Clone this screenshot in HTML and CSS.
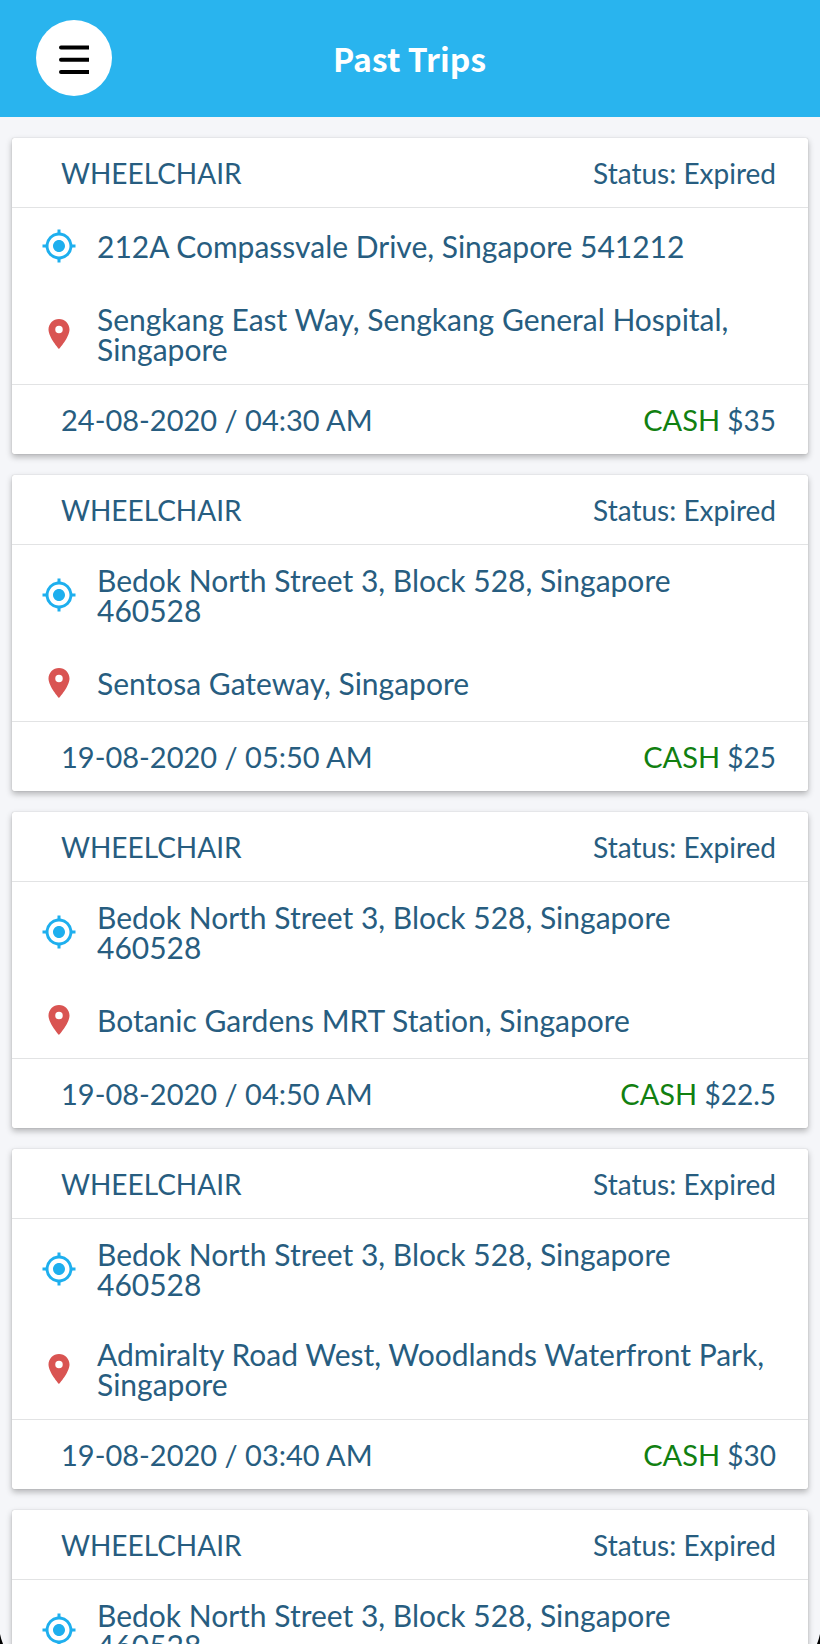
FILE: index.html
```html
<!DOCTYPE html>
<html lang="en">
<head>
    <meta charset="UTF-8">
    <meta name="viewport" content="width=device-width, initial-scale=1.0">
    <title>Past Trips</title>
    <link rel="stylesheet" href="styles.css">
</head>
<body>
    <svg class="sprite" aria-hidden="true">
        <symbol id="pickup" viewBox="0 0 24 24">
            <path d="M12 8c-2.21 0-4 1.79-4 4s1.79 4 4 4 4-1.79 4-4-1.79-4-4-4zm8.94 3A8.994 8.994 0 0 0 13 3.06V1h-2v2.06A8.994 8.994 0 0 0 3.06 11H1v2h2.06A8.994 8.994 0 0 0 11 20.94V23h2v-2.06A8.994 8.994 0 0 0 20.94 13H23v-2h-2.06zM12 19c-3.87 0-7-3.13-7-7s3.13-7 7-7 7 3.13 7 7-3.13 7-7 7z"/>
        </symbol>
        <symbol id="drop" viewBox="0 0 24 24">
            <path d="M12 2C8.13 2 5 5.13 5 9c0 5.25 7 13 7 13s7-7.75 7-13c0-3.87-3.13-7-7-7zm0 9.500a2.500 2.500 0 0 1 0-5 2.500 2.500 0 0 1 0 5z"/>
        </symbol>
    </svg>

    <header class="topbar">
        <button class="menu" type="button" aria-label="Menu">
            <svg viewBox="0 0 30 30" aria-hidden="true">
                <path d="M2 .5h28v4H2a2 2 0 0 1 0-4zM2 12.800h28v4H2a2 2 0 0 1 0-4zM2 25h28v4H2a2 2 0 0 1 0-4z"/>
            </svg>
        </button>
        <h1>Past Trips</h1>
    </header>

    <main class="trips">
        <article class="card">
            <div class="card-head">
                <h2>WHEELCHAIR</h2>
                <span>Status: Expired</span>
            </div>
            <div class="place">
                <svg class="icon pickup"><use href="#pickup"/></svg>
                <p>212A Compassvale Drive, Singapore 541212</p>
            </div>
            <div class="place">
                <svg class="icon drop"><use href="#drop"/></svg>
                <p>Sengkang East Way, Sengkang General Hospital, Singapore</p>
            </div>
            <div class="card-foot">
                <time>24-08-2020 / 04:30 AM</time>
                <span><span class="cash">CASH</span> $35</span>
            </div>
        </article>

        <article class="card">
            <div class="card-head">
                <h2>WHEELCHAIR</h2>
                <span>Status: Expired</span>
            </div>
            <div class="place">
                <svg class="icon pickup"><use href="#pickup"/></svg>
                <p>Bedok North Street 3, Block 528, Singapore 460528</p>
            </div>
            <div class="place">
                <svg class="icon drop"><use href="#drop"/></svg>
                <p>Sentosa Gateway, Singapore</p>
            </div>
            <div class="card-foot">
                <time>19-08-2020 / 05:50 AM</time>
                <span><span class="cash">CASH</span> $25</span>
            </div>
        </article>

        <article class="card">
            <div class="card-head">
                <h2>WHEELCHAIR</h2>
                <span>Status: Expired</span>
            </div>
            <div class="place">
                <svg class="icon pickup"><use href="#pickup"/></svg>
                <p>Bedok North Street 3, Block 528, Singapore 460528</p>
            </div>
            <div class="place">
                <svg class="icon drop"><use href="#drop"/></svg>
                <p>Botanic Gardens MRT Station, Singapore</p>
            </div>
            <div class="card-foot">
                <time>19-08-2020 / 04:50 AM</time>
                <span><span class="cash">CASH</span> $22.5</span>
            </div>
        </article>

        <article class="card">
            <div class="card-head">
                <h2>WHEELCHAIR</h2>
                <span>Status: Expired</span>
            </div>
            <div class="place">
                <svg class="icon pickup"><use href="#pickup"/></svg>
                <p>Bedok North Street 3, Block 528, Singapore 460528</p>
            </div>
            <div class="place">
                <svg class="icon drop"><use href="#drop"/></svg>
                <p>Admiralty Road West, Woodlands Waterfront Park, Singapore</p>
            </div>
            <div class="card-foot">
                <time>19-08-2020 / 03:40 AM</time>
                <span><span class="cash">CASH</span> $30</span>
            </div>
        </article>

        <article class="card">
            <div class="card-head">
                <h2>WHEELCHAIR</h2>
                <span>Status: Expired</span>
            </div>
            <div class="place">
                <svg class="icon pickup"><use href="#pickup"/></svg>
                <p>Bedok North Street 3, Block 528, Singapore 460528</p>
            </div>
        </article>
    </main>

    <svg class="corner left" viewBox="0 0 3 10" aria-hidden="true"><path d="M0 0Q1 5 3 10H0z"/></svg>
    <svg class="corner right" viewBox="0 0 3 10" aria-hidden="true"><path d="M3 0Q2 5 0 10H3z"/></svg>
</body>
</html>
```

FILE: styles.css
```css
* {
    box-sizing: border-box;
}
html, body {
    height: 100%;
}
body {
    margin: 0;
    display: flex;
    flex-direction: column;
    overflow: hidden;
    background-color: #f5f6f9;
    color: #275d80;
    font-family: Lato, "Open Sans", sans-serif;
    font-size: 28px;
    font-variant-ligatures: none;
    line-height: 30px;
}
h1, h2, p {
    margin: 0;
    font-size: inherit;
    font-weight: normal;
}
.sprite {
    display: none;
}

.topbar {
    flex: none;
    display: grid;
    grid-template-columns: 1fr auto 1fr;
    align-items: center;
    padding: 20px 37px 21px 36px;
    background-color: #29b4ee;
}
.topbar h1 {
    color: white;
    font-family: "Noto Sans CJK SC", "Noto Sans", sans-serif;
    font-size: 32px;
    font-weight: bold;
}
.menu {
    display: flex;
    align-items: center;
    justify-content: center;
    width: 76px;
    height: 76px;
    padding: 4px 0 0;
    border: 0;
    border-radius: 50%;
    background-color: white;
    cursor: pointer;
}
.menu svg {
    width: 30px;
    height: 30px;
}

.trips {
    flex: 1;
    min-height: 0;
    display: flex;
    flex-direction: column;
    gap: 21px;
    padding: 21px 12px;
    overflow: hidden;
}
.card {
    flex: none;
    border-radius: 2px;
    background-color: white;
    box-shadow: 0 3px 6px rgba(0, 0, 0, 0.28), 0 0 1px rgba(0, 0, 0, 0.3);
}
.card-head, .card-foot {
    display: flex;
    align-items: center;
    justify-content: space-between;
    height: 70px;
    padding: 0 32px 0 49px;
}
.card-head {
    border-bottom: 1px solid #e2e3e4;
}
.card-foot {
    border-top: 1px solid #e2e3e4;
}
.card-foot time, .cash {
    font-size: 29px;
}
.cash {
    color: #118011;
}
.place {
    display: flex;
    align-items: center;
    gap: 20px;
    padding: 20px 32px 20px 29px;
}
.place p {
    font-size: 30px;
}
.icon {
    flex: none;
    width: 36px;
    height: 36px;
}
.pickup {
    fill: #1eafee;
}
.drop {
    fill: #d95452;
}

/* rounded screen corners */
.corner {
    position: fixed;
    bottom: 0;
    width: 3px;
    height: 10px;
}
.left {
    left: 0;
}
.right {
    right: 0;
}
```
